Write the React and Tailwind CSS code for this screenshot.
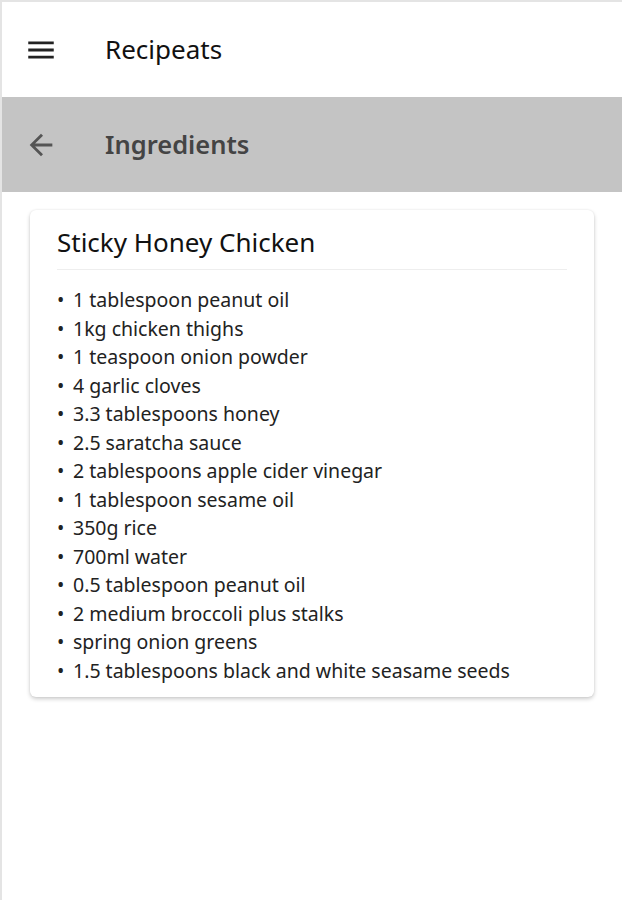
import React from 'react';

const ingredients = [
  '1 tablespoon peanut oil',
  '1kg chicken thighs',
  '1 teaspoon onion powder',
  '4 garlic cloves',
  '3.3 tablespoons honey',
  '2.5 saratcha sauce',
  '2 tablespoons apple cider vinegar',
  '1 tablespoon sesame oil',
  '350g rice',
  '700ml water',
  '0.5 tablespoon peanut oil',
  '2 medium broccoli plus stalks',
  'spring onion greens',
  '1.5 tablespoons black and white seasame seeds',
];

export default function App() {
  return (
    <div className="min-h-[900px] bg-white border-t-2 border-l-2 border-[#e4e4e4] font-['Noto_Sans',sans-serif]">
      <header className="h-[95px] flex items-center">
        <svg className="ml-[22px] w-[34px] h-[34px] text-[#222]" viewBox="0 0 24 24" fill="currentColor">
          <path d="M3 18h18v-2H3v2zm0-5h18v-2H3v2zm0-7v2h18V6H3z" />
        </svg>
        <h1 className="ml-[47px] text-[26px] text-[#111]">Recipeats</h1>
      </header>
      <div className="h-[95px] bg-[#c4c4c4] flex items-center">
        <svg className="ml-[22px] w-[34px] h-[34px] text-[#555]" viewBox="0 0 24 24" fill="currentColor">
          <path d="M20 11H7.83l5.59-5.59L12 4l-8 8 8 8 1.41-1.41L7.83 13H20v-2z" />
        </svg>
        <h2 className="ml-[47px] text-[25.5px] font-semibold text-[#444]">Ingredients</h2>
      </div>
      <div className="mx-[28px] mt-[18px] rounded-md bg-white shadow-[0_2px_4px_rgba(0,0,0,0.2),0_0_2px_rgba(0,0,0,0.08)] px-[27px] pt-[15px] pb-[12px]">
        <h3 className="text-[26px] leading-[34px] text-[#111] pb-[10px] border-b border-[#eee]">Sticky Honey Chicken</h3>
        <ul className="mt-[16px] text-[19.5px] leading-[28.5px] text-[#222]">
          {ingredients.map((item, i) => (
            <li key={i} className="flex">
              <span className="w-[16px]">•</span>
              <span>{item}</span>
            </li>
          ))}
        </ul>
      </div>
    </div>
  );
}
